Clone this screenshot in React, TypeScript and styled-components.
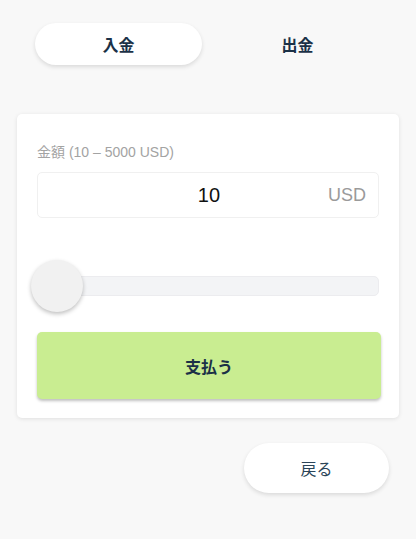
import React, { useState } from 'react';
import styled, { createGlobalStyle } from 'styled-components';

const GlobalStyle = createGlobalStyle`
  html, body {
    margin: 0;
    padding: 0;
    background: #f8f8f8;
  }
  body {
    font-family: "Liberation Sans", "Noto Sans CJK JP", sans-serif;
  }
`;

const Page = styled.div`
  padding: 23px 17px 40px;
  box-sizing: border-box;
  width: 416px;
`;

const Tabs = styled.div`
  display: grid;
  grid-template-columns: 1fr 1fr;
  gap: 12px;
  padding: 0 18px;
  margin-bottom: 49px;
`;

const Tab = styled.button<{ active?: boolean }>`
  height: 42px;
  border: none;
  border-radius: 21px;
  background: ${p => (p.active ? '#ffffff' : 'transparent')};
  box-shadow: ${p => (p.active ? '0 2px 4px rgba(0, 0, 0, 0.12)' : 'none')};
  font-family: inherit;
  font-size: 16px;
  font-weight: 700;
  color: #1b3147;
  cursor: pointer;
`;

const Card = styled.div`
  background: #ffffff;
  border-radius: 5px;
  box-shadow: 0 1px 4px rgba(0, 0, 0, 0.1);
  padding: 30px 20px 19px 20px;
`;

const Label = styled.div`
  font-size: 14px;
  color: #a3a3a3;
  line-height: 16px;
  margin-bottom: 12px;
`;

const AmountBox = styled.div`
  display: flex;
  align-items: center;
  height: 46px;
  border: 1px solid #f0f0f0;
  border-radius: 5px;
  box-sizing: border-box;
  padding: 0 12px;
`;

const AmountValue = styled.div`
  flex: 1;
  text-align: center;
  font-size: 20px;
  color: #111111;
  padding-left: 40px;
`;

const Currency = styled.div`
  font-size: 18px;
  color: #9a9a9a;
`;

const SliderWrap = styled.div`
  position: relative;
  height: 52px;
  margin: 42px 0 20px;
  display: flex;
  align-items: center;
`;

const Track = styled.div`
  width: 100%;
  height: 20px;
  background: #f3f4f6;
  border: 1px solid #ececef;
  border-radius: 5px;
  box-sizing: border-box;
`;

const Thumb = styled.div`
  position: absolute;
  left: -6px;
  top: 0;
  width: 52px;
  height: 52px;
  border-radius: 50%;
  background: #f1f1f1;
  box-shadow: 0 2px 4px rgba(0, 0, 0, 0.25);
`;

const PayButton = styled.button`
  display: block;
  width: calc(100% + 2px);
  height: 67px;
  border: none;
  border-radius: 5px;
  background: #c9ed91;
  box-shadow: 0 2px 3px rgba(0, 0, 0, 0.25);
  font-family: inherit;
  font-size: 16px;
  font-weight: 700;
  color: #1b3147;
  cursor: pointer;
`;

const Footer = styled.div`
  display: flex;
  justify-content: flex-end;
  padding-top: 25px;
`;

const BackButton = styled.button`
  width: 145px;
  height: 50px;
  border: none;
  border-radius: 25px;
  background: #ffffff;
  box-shadow: 0 2px 4px rgba(0, 0, 0, 0.12);
  font-family: inherit;
  font-size: 16px;
  color: #2b4559;
  cursor: pointer;
  margin-right: 10px;
`;

export default function App() {
  const [tab, setTab] = useState<'in' | 'out'>('in');
  return (
    <Page>
      <GlobalStyle />
      <Tabs>
        <Tab active={tab === 'in'} onClick={() => setTab('in')}>入金</Tab>
        <Tab active={tab === 'out'} onClick={() => setTab('out')}>出金</Tab>
      </Tabs>
      <Card>
        <Label>金額 (10 – 5000 USD)</Label>
        <AmountBox>
          <AmountValue>10</AmountValue>
          <Currency>USD</Currency>
        </AmountBox>
        <SliderWrap>
          <Track />
          <Thumb />
        </SliderWrap>
        <PayButton>支払う</PayButton>
      </Card>
      <Footer>
        <BackButton>戻る</BackButton>
      </Footer>
    </Page>
  );
}
